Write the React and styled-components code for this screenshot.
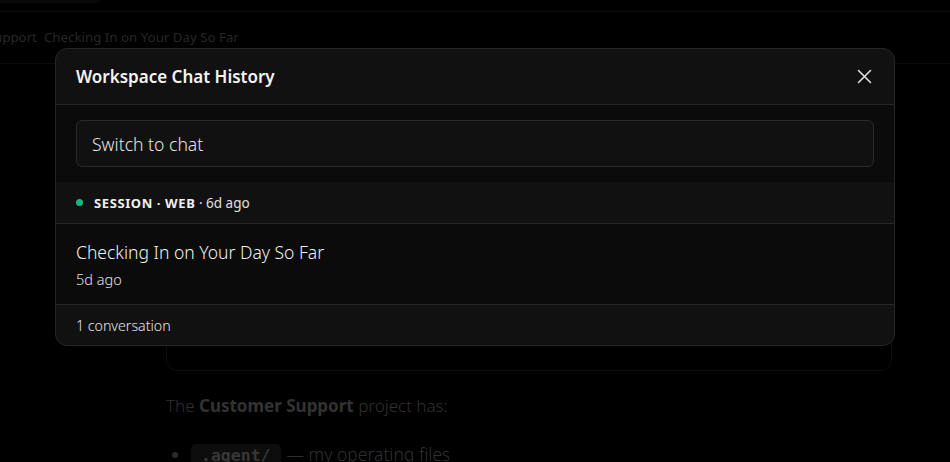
import React from "react";
import styled, { createGlobalStyle } from "styled-components";

const Global = createGlobalStyle`
  html, body { margin: 0; padding: 0; background: #000; }
  body { font-family: "Noto Sans", "Open Sans", sans-serif; overflow: hidden; }
  * { box-sizing: border-box; }
`;

const Page = styled.div`
  width: 950px;
  height: 462px;
  position: relative;
  overflow: hidden;
  background: #000;
`;

const TopStrip = styled.div`
  height: 12px;
  border-bottom: 1px solid #121212;
  display: flex;
`;

const TopTab = styled.div`
  width: 100px;
  height: 3px;
  background: #0e0e0e;
  border-bottom-right-radius: 3px;
`;

const Breadcrumb = styled.div`
  height: 52px;
  border-bottom: 1px solid #121212;
  display: flex;
  align-items: center;
  gap: 7px;
  font-size: 13.3px;
  color: #3c3c3c;
  white-space: nowrap;
  padding-bottom: 2px;
`;

const Crumb = styled.span`
  margin-left: ${(p) => p.$offset || 0}px;
`;

const Content = styled.div`
  padding: 0 58px 0 166px;
`;

const BgCard = styled.div`
  height: 307px;
  border: 1px solid #141414;
  border-top: none;
  border-radius: 0 0 12px 12px;
`;

const Para = styled.p`
  margin: 23px 0 0;
  font-size: 17px;
  font-weight: 300;
  color: #4a4a4a;
  strong { font-weight: 700; color: #4e4e4e; }
`;

const List = styled.ul`
  margin: 25px 0 0;
  padding-left: 25px;
  font-size: 17.5px;
  font-weight: 300;
  color: #4a4a4a;
  li::marker { color: #444; }
`;

const Code = styled.code`
  font-family: "DejaVu Sans Mono", monospace;
  font-weight: 700;
  font-size: 16.5px;
  background: #141414;
  color: #555;
  border-radius: 5px;
  padding: 2px 10px;
  margin-right: 6px;
`;

const Overlay = styled.div`
  position: absolute;
  inset: 0;
  background: rgba(0, 0, 0, 0.35);
`;

const Modal = styled.div`
  position: absolute;
  left: 55px;
  top: 48px;
  width: 840px;
  background: #111111;
  border: 1px solid #262626;
  border-radius: 12px;
  overflow: hidden;
  display: flex;
  flex-direction: column;
  color: #eaeaea;
`;

const Header = styled.div`
  height: 56px;
  border-bottom: 1px solid #262626;
  display: flex;
  align-items: center;
  justify-content: space-between;
  padding: 0 22px 0 20px;
`;

const Title = styled.h2`
  margin: 0;
  font-size: 17px;
  font-weight: 600;
  color: #f4f4f4;
  letter-spacing: 0;
`;

const CloseBtn = styled.button`
  background: none;
  border: none;
  padding: 0;
  width: 16px;
  height: 16px;
  display: flex;
  align-items: center;
  justify-content: center;
  color: #e6e6e6;
  cursor: pointer;
`;

const SearchArea = styled.div`
  background: #0b0b0b;
  padding: 15px 20px 15px 20px;
`;

const SearchInput = styled.input`
  width: 100%;
  height: 47px;
  background: #111111;
  border: 1px solid #2a2a2a;
  border-radius: 6px;
  padding: 0 15px;
  font-family: inherit;
  font-size: 17.6px;
  font-weight: 300;
  color: #eee;
  outline: none;
  &::placeholder { color: #e4e4e4; opacity: 1; }
`;

const GroupHeader = styled.div`
  height: 42px;
  background: #111111;
  border-bottom: 1px solid #262626;
  display: flex;
  align-items: center;
  gap: 11px;
  padding: 0 20px 0 20px;
  font-size: 13px;
`;

const Dot = styled.span`
  width: 7px;
  height: 7px;
  border-radius: 50%;
  background: #10b981;
  flex: none;
`;

const GroupLabel = styled.span`
  font-weight: 700;
  color: #f0f0f0;
  font-size: 13px;
  letter-spacing: 0.6px;
`;

const GroupMeta = styled.span`
  color: #e0e0e0;
  font-weight: 400;
  font-size: 13.5px;
`;

const Item = styled.div`
  height: 81px;
  background: #0b0b0b;
  border-bottom: 1px solid #262626;
  display: flex;
  flex-direction: column;
  justify-content: center;
  padding: 0 20px;
  gap: 5px;
`;

const ItemTitle = styled.div`
  font-size: 17.5px;
  font-weight: 300;
  color: #f0f0f0;
`;

const ItemTime = styled.div`
  font-size: 14.5px;
  font-weight: 300;
  color: #e0e0e0;
`;

const Footer = styled.div`
  height: 40px;
  display: flex;
  align-items: center;
  padding: 0 20px;
  font-size: 14.2px;
  font-weight: 300;
  color: #e6e6e6;
`;

export default function App() {
  return (
    <Page>
      <Global />
      <TopStrip>
        <TopTab />
      </TopStrip>
      <Breadcrumb>
        <Crumb $offset={-78}>Customer Support</Crumb>
        <Crumb>Checking In on Your Day So Far</Crumb>
      </Breadcrumb>
      <Content>
        <BgCard />
        <Para>
          The <strong>Customer Support</strong> project has:
        </Para>
        <List>
          <li>
            <Code>.agent/</Code>— my operating files
          </li>
        </List>
      </Content>
      <Overlay />
      <Modal role="dialog" aria-label="Workspace Chat History">
        <Header>
          <Title>Workspace Chat History</Title>
          <CloseBtn aria-label="Close">
            <svg width="15" height="15" viewBox="0 0 15 15" fill="none" stroke="currentColor" strokeWidth="1.5" strokeLinecap="round">
              <path d="M1.5 1.5 L13.5 13.5 M13.5 1.5 L1.5 13.5" />
            </svg>
          </CloseBtn>
        </Header>
        <SearchArea>
          <SearchInput placeholder="Switch to chat" />
        </SearchArea>
        <GroupHeader>
          <Dot />
          <span>
            <GroupLabel>SESSION · WEB</GroupLabel>
            <GroupMeta> · 6d ago</GroupMeta>
          </span>
        </GroupHeader>
        <Item>
          <ItemTitle>Checking In on Your Day So Far</ItemTitle>
          <ItemTime>5d ago</ItemTime>
        </Item>
        <Footer>1 conversation</Footer>
      </Modal>
    </Page>
  );
}
